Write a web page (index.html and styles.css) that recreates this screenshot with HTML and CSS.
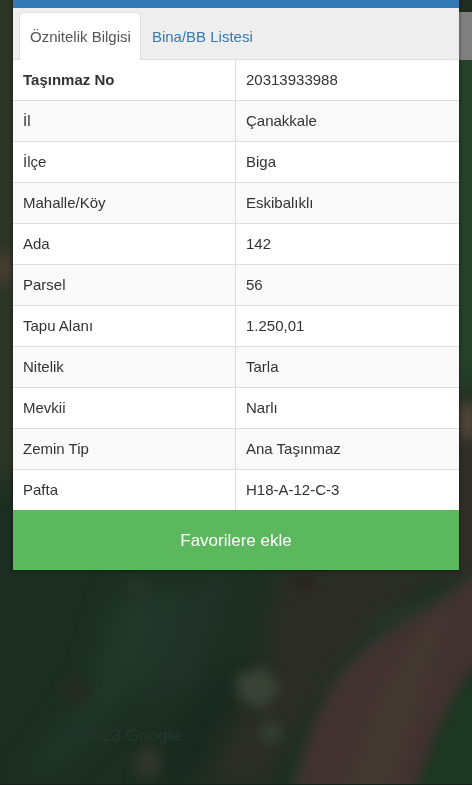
FILE: index.html
```html
<!DOCTYPE html>
<html lang="tr">
<head>
<meta charset="utf-8">
<meta name="viewport" content="width=device-width, initial-scale=1">
<title>Taşınmaz Bilgisi</title>
<link rel="stylesheet" href="styles.css">
</head>
<body>
<svg class="map" viewBox="0 0 472 785" preserveAspectRatio="xMidYMid slice" aria-hidden="true">
  <defs>
    <filter id="soft" x="-30%" y="-30%" width="160%" height="160%" color-interpolation-filters="sRGB"><feGaussianBlur stdDeviation="6"/></filter>
    <filter id="wide" x="-50%" y="-50%" width="200%" height="200%" color-interpolation-filters="sRGB"><feGaussianBlur stdDeviation="14"/></filter>
  </defs>
  <rect width="472" height="785" fill="#1c2e22"/>
  <g filter="url(#wide)">
    <path d="M-20 -20H40V480H-20Z" fill="#2d3628"/>
    <path d="M430 20H510V390H430Z" fill="#26402a"/>
    <path d="M430 400H510V580H430Z" fill="#302e27"/>
    <path d="M280 560H450L340 670L260 790H200L260 680Z" fill="#2c2d26"/>
    <path d="M120 590L190 590L140 680L60 760L20 790L90 690Z" fill="#21382b"/>
    <path d="M170 600L235 570L200 680L140 710Z" fill="#213328"/>
    <path d="M200 690L240 650L230 720L190 785H150Z" fill="#19291f"/>
  </g>
  <g filter="url(#soft)">
    <path d="M470 575L380 615L330 680L285 785H320L345 690L390 640L470 595Z" fill="#25342a"/>
    <path d="M490 564L440 602L394 629L362 652L333 685L314 722L292 800H412L436 735L464 680L490 650Z" fill="#41322f"/>
    <path d="M415 635L450 602L425 690L390 800H340L375 700Z" fill="#433731"/>
    <path d="M480 670L452 700L412 800H490Z" fill="#1c3722"/>
    <path d="M236 675L266 668L280 688L264 709L240 701Z" fill="#3a4336"/>
    <ellipse cx="271" cy="733" rx="11" ry="10" fill="#324035"/>
    <ellipse cx="76" cy="691" rx="13" ry="12" fill="#252a20"/>
    <ellipse cx="148" cy="763" rx="14" ry="16" fill="#30352c"/>
    <ellipse cx="138" cy="586" rx="10" ry="8" fill="#29352b"/>
    <ellipse cx="304" cy="582" rx="12" ry="8" fill="#272420"/>
    <ellipse cx="4" cy="268" rx="8" ry="18" fill="#493f32"/>
    <ellipse cx="468" cy="421" rx="9" ry="20" fill="#51473a"/>
    <ellipse cx="466" cy="3" rx="12" ry="8" fill="#242b20"/>
  </g>
  <rect x="0" y="784" width="472" height="1" fill="#162119"/>
  <text class="credit" x="66" y="741">© 2023 Google</text>
</svg>
<div class="handle" aria-hidden="true"></div>
<main class="panel">
  <nav class="tabs">
    <a class="tab active" href="#info" aria-current="page">Öznitelik Bilgisi</a>
    <a class="tab" href="#buildings">Bina/BB Listesi</a>
  </nav>
  <table class="info" id="info">
    <tbody>
      <tr><th scope="row" class="strong">Taşınmaz No</th><td>20313933988</td></tr>
      <tr><th scope="row">İl</th><td>Çanakkale</td></tr>
      <tr><th scope="row">İlçe</th><td>Biga</td></tr>
      <tr><th scope="row">Mahalle/Köy</th><td>Eskibalıklı</td></tr>
      <tr><th scope="row">Ada</th><td>142</td></tr>
      <tr><th scope="row">Parsel</th><td>56</td></tr>
      <tr><th scope="row">Tapu Alanı</th><td>1.250,01</td></tr>
      <tr><th scope="row">Nitelik</th><td>Tarla</td></tr>
      <tr><th scope="row">Mevkii</th><td>Narlı</td></tr>
      <tr><th scope="row">Zemin Tip</th><td>Ana Taşınmaz</td></tr>
      <tr><th scope="row">Pafta</th><td>H18-A-12-C-3</td></tr>
    </tbody>
  </table>
  <button class="favorite" type="button">Favorilere ekle</button>
</main>
</body>
</html>
```
FILE: styles.css
```css
* {
  box-sizing: border-box;
}

body {
  margin: 0;
  min-height: 100vh;
  background: #1c2e22;
  color: #333;
  font: 15px/20px "Liberation Sans", Arial, sans-serif;
}

.map {
  position: fixed;
  inset: 0;
  width: 100%;
  height: 100%;
}

.credit {
  fill: #25362c;
  font-size: 17px;
}

.handle {
  position: absolute;
  top: 12px;
  right: 0;
  width: 24px;
  height: 48px;
  background: #808080;
}

.panel {
  position: relative;
  margin: 0 13px;
  border-top: 8px solid #337ab7;
  background: #fff;
  box-shadow: 0 0 4px rgba(0, 0, 0, 0.5);
}

.tabs {
  display: flex;
  padding: 4px 6px 0;
  border-bottom: 1px solid #ddd;
  background: #eee;
}

.tab {
  margin-bottom: -1px;
  padding: 14px 9px 13px 10px;
  border: 1px solid transparent;
  border-bottom: 0;
  border-radius: 4px 4px 0 0;
  color: #337ab7;
  text-decoration: none;
}

.tab.active {
  border-color: #ddd;
  background: #fff;
  color: #555;
}

.info {
  width: 100%;
  table-layout: fixed;
  border-spacing: 0;
}

.info th,
.info td {
  height: 41px;
  padding: 10px;
  border-bottom: 1px solid #ddd;
  font-weight: normal;
  text-align: left;
}

.info tr:last-child > * {
  height: 40px;
  border-bottom: 0;
}

.info th {
  border-right: 1px solid #ddd;
}

.info .strong {
  font-weight: bold;
}

.info tr:nth-child(even) {
  background: #f9f9f9;
}

.favorite {
  display: block;
  width: 100%;
  padding: 20px 12px 18px;
  border: 0;
  background: #5cb85c;
  color: #fff;
  font: 17px/22px "Liberation Sans", Arial, sans-serif;
}
```
